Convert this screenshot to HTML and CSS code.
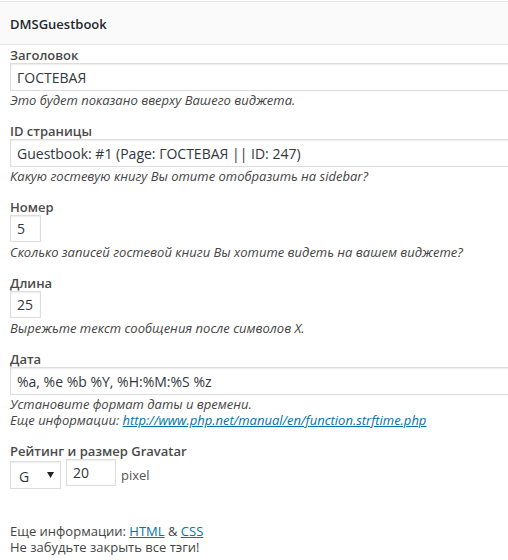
FILE: index.html
```html
<!DOCTYPE html>
<html lang="ru">
<head>
<meta charset="utf-8">
<title>DMSGuestbook</title>
<link rel="stylesheet" href="styles.css">
</head>
<body>
<div class="widget">
  <div class="widget-top"><h3 class="widget-title">DMSGuestbook</h3></div>
  <div class="widget-inside">
    <div class="field">
      <label class="label">Заголовок</label>
      <input class="text wide" type="text" value="ГОСТЕВАЯ">
      <div class="desc">Это будет показано вверху Вашего виджета.</div>
    </div>
    <div class="field">
      <label class="label">ID страницы</label>
      <input class="text wide" type="text" value="Guestbook: #1 (Page: ГОСТЕВАЯ || ID: 247)">
      <div class="desc">Какую гостевую книгу Вы отите отобразить на sidebar?</div>
    </div>
    <div class="field">
      <label class="label">Номер</label>
      <input class="text small" type="text" value="5">
      <div class="desc">Сколько записей гостевой книги Вы хотите видеть на вашем виджете?</div>
    </div>
    <div class="field">
      <label class="label">Длина</label>
      <input class="text small" type="text" value="25">
      <div class="desc">Вырежьте текст сообщения после символов X.</div>
    </div>
    <div class="field">
      <label class="label">Дата</label>
      <input class="text wide" type="text" value="%a, %e %b %Y, %H:%M:%S %z">
      <div class="desc">Установите формат даты и времени.<br>Еще информации: <a href="#">http://www.php.net/manual/en/function.strftime.php</a></div>
    </div>
    <div class="field">
      <label class="label">Рейтинг и размер Gravatar</label>
      <div class="grav-row">
        <div class="select">
          <span class="select-value">G</span>
          <svg class="select-arrow" width="7" height="6" viewBox="0 0 7 6"><path d="M0 0H7L3.5 6Z" fill="#222"/></svg>
        </div>
        <input class="text size" type="text" value="20">
        <span class="unit">pixel</span>
      </div>
    </div>
    <div class="notes">
      <div>Еще информации: <a href="#">HTML</a> &amp; <a href="#">CSS</a></div>
      <div>Не забудьте закрыть все тэги!</div>
    </div>
  </div>
</div>
</body>
</html>
```

FILE: styles.css
```css
html, body {
  margin: 0;
  padding: 0;
  overflow: hidden;
  background: #fff;
}
body {
  font-family: "Open Sans", "Liberation Sans", sans-serif;
  font-size: 13px;
  color: #444;
}
.widget {
  width: 580px;
  padding-top: 1px;
}
.widget-top {
  background: #fafafa;
  border-top: 1px solid #e5e5e5;
  border-bottom: 1px solid #e5e5e5;
  height: 42px;
}
.widget-title {
  margin: 0;
  padding: 0 10px;
  font-size: 13px;
  font-weight: 600;
  line-height: 44px;
  color: #23282d;
}
.widget-inside {
  padding: 2px 10px 0 10px;
}
.field {
  margin-bottom: 16px;
}
.label {
  display: block;
  font-weight: 600;
  line-height: 16px;
  color: #4a4a4a;
}
.text {
  display: block;
  box-sizing: border-box;
  height: 28px;
  margin: 0;
  padding: 0 6px;
  border: 1px solid #ddd;
  box-shadow: inset 0 1px 2px rgba(0,0,0,0.07);
  background: #fff;
  font-family: "Open Sans", "Liberation Sans", sans-serif;
  font-size: 14px;
  color: #32373c;
  outline: none;
  border-radius: 0;
}
.wide {
  width: 100%;
}
.small {
  width: 31px;
  height: 27px;
  margin-bottom: 1px;
  padding: 0 6px;
}
.desc {
  font-style: italic;
  line-height: 16px;
  padding-top: 1px;
  margin-bottom: -1px;
  color: #444;
}
a {
  color: #0073aa;
  text-decoration: underline;
}
.grav-row {
  display: flex;
  align-items: flex-start;
  gap: 5px;
}
.select {
  box-sizing: border-box;
  width: 51px;
  height: 28px;
  margin-top: 2px;
  border: 1px solid #ddd;
  box-shadow: inset 0 1px 2px rgba(0,0,0,0.07);
  background: #fff;
  display: flex;
  align-items: center;
  justify-content: space-between;
  padding: 0 6px 0 8px;
  font-size: 14px;
  color: #32373c;
}
.select-value {
  padding-top: 2px;
}
.select-arrow {
  display: block;
}
.size {
  width: 50px;
  height: 27px;
  padding: 0 6px;
}
.unit {
  line-height: 27px;
  padding-top: 3px;
  color: #555;
}
.notes {
  padding-top: 18px;
  line-height: 16px;
}
```
